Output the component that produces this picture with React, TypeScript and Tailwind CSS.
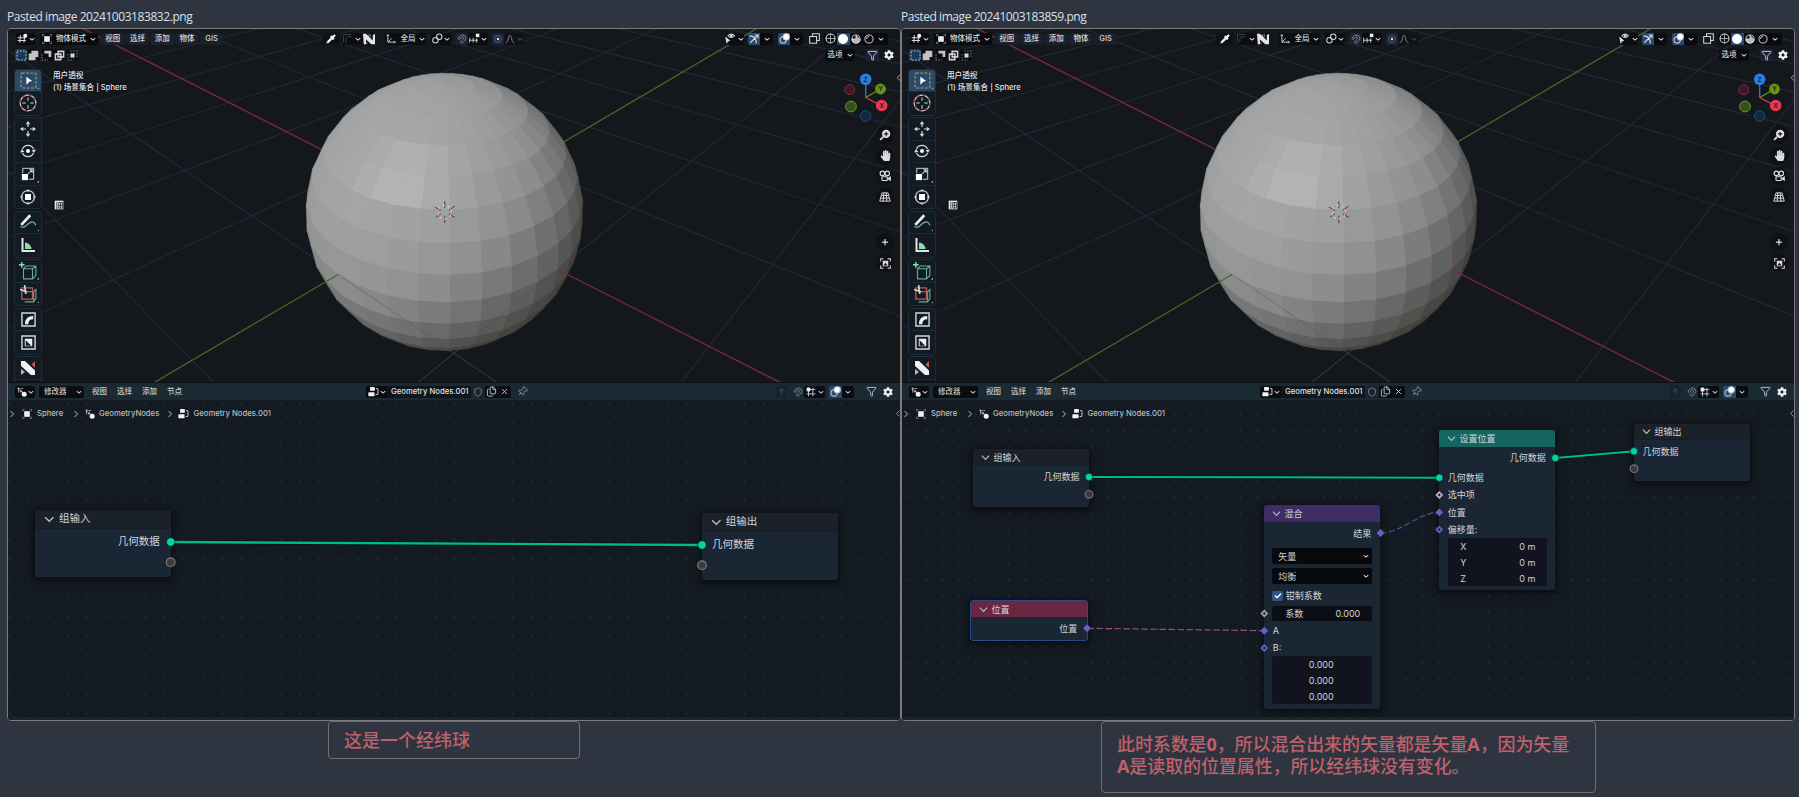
import React from "react";
import { Pipette, Filter, Shield, Files, Pin, X, ArrowUp, Check } from "lucide-react";
import { FaCog, FaHandPaper } from "react-icons/fa";

/* ---------- 3D scene ---------- */

const CX = 436.5;
const CY = 183;
const R = 138.5;
const DIST = 4.52;
const FOCAL = R * Math.sqrt(DIST * DIST - 1);
const ELEV = (33.1 * Math.PI) / 180;
const TURN = (47.1 * Math.PI) / 180;
const SE = Math.sin(ELEV);
const CE = Math.cos(ELEV);

type V3 = [number, number, number];

function toView(right: number, toward: number, up: number): V3 {
  return [right, up * CE - toward * SE, up * SE + toward * CE];
}

function project(v: V3): [number, number] {
  const s = FOCAL / (DIST - v[2]);
  return [CX + v[0] * s, CY - v[1] * s];
}

function floorPoint(x: number, y: number): V3 {
  const right = x * Math.sin(TURN) + y * Math.cos(TURN);
  const toward = x * Math.cos(TURN) - y * Math.sin(TURN);
  return toView(right, toward, 0);
}

function floorLine(x1: number, y1: number, x2: number, y2: number): string {
  let a = floorPoint(x1, y1);
  let b = floorPoint(x2, y2);
  const limit = DIST - 0.4;
  if (a[2] > limit && b[2] > limit) return "";
  const cut = (p: V3, q: V3): V3 => {
    const t = (limit - p[2]) / (q[2] - p[2]);
    return [p[0] + (q[0] - p[0]) * t, p[1] + (q[1] - p[1]) * t, limit];
  };
  if (a[2] > limit) a = cut(a, b);
  else if (b[2] > limit) b = cut(b, a);
  const [ax, ay] = project(a);
  const [bx, by] = project(b);
  return `M${ax.toFixed(1)} ${ay.toFixed(1)}L${bx.toFixed(1)} ${by.toFixed(1)}`;
}

const RAMP: [number, number][] = [
  [-1, 0.18],
  [-0.25, 0.25],
  [0, 0.33],
  [0.213, 0.41],
  [0.42, 0.495],
  [0.57, 0.56],
  [0.8, 0.62],
  [1, 0.65],
];

function shade(n: V3): string {
  const d = -0.42 * n[0] + 0.42 * n[1] + 0.8 * n[2];
  let l = 0.64;
  for (let i = 1; i < RAMP.length; i++) {
    if (d <= RAMP[i][0]) {
      const [x0, y0] = RAMP[i - 1];
      const [x1, y1] = RAMP[i];
      l = y0 + ((y1 - y0) * (d - x0)) / (x1 - x0);
      break;
    }
  }
  l += 0.075 * Math.exp(-(((n[0] + 0.23) / 0.22) ** 2) / 1.4 - (((n[1] - 0.2) / 0.12) ** 2) / 2);
  const warm = Math.max(0, Math.min(1, (0.12 - d) * 2.4));
  const v = l * 255;
  return `rgb(${Math.round(v + warm * 5)},${Math.round(v + 1)},${Math.round(v + 1 - warm * 5)})`;
}

function sphereFaces() {
  const faces: { pts: string; fill: string }[] = [];
  const step = Math.PI / 16;
  const at = (t: number, a: number) =>
    toView(Math.sin(t) * Math.sin(a), Math.sin(t) * Math.cos(a), Math.cos(t));
  for (let k = 0; k < 16; k++) {
    for (let s = 0; s < 32; s++) {
      const a0 = TURN + s * step;
      const n = at((k + 0.5) * step, a0 + step / 2);
      if (n[2] * DIST < 0.975) continue;
      const quad = [at(k * step, a0), at(k * step, a0 + step), at((k + 1) * step, a0 + step), at((k + 1) * step, a0)];
      faces.push({
        pts: quad.map((p) => project(p).map((c) => c.toFixed(1)).join(",")).join(" "),
        fill: shade(n),
      });
    }
  }
  return faces;
}

const FACES = sphereFaces();
const EXT = 12;
const OFFSETS = Array.from({ length: EXT * 2 + 1 }, (_, i) => i - EXT).filter((i) => i !== 0);
const GRID = OFFSETS.map((i) => floorLine(i, -EXT, i, EXT) + floorLine(-EXT, i, EXT, i)).join("");
const NEAR_GRID = floorLine(1, -EXT, 1, 0) + floorLine(0, -1, EXT, -1);

function Scene() {
  const [ox, oy] = [436.8, 183.2];
  return (
    <svg className="absolute inset-0" width="892" height="353" viewBox="0 0 892 353">
      <rect width="892" height="353" fill="#14171c" />
      <path d={GRID} stroke="#222838" strokeWidth="1.1" fill="none" />
      <path d={floorLine(-EXT, 0, 0, 0)} stroke="#7a2b45" strokeWidth="1.3" />
      <path d={floorLine(0, 0, 0, EXT)} stroke="#45682a" strokeWidth="1.3" />
      <g strokeWidth="1.6" strokeLinejoin="round">
        {FACES.map((f, i) => (
          <polygon key={i} points={f.pts} fill={f.fill} stroke={f.fill} strokeOpacity="0.5" />
        ))}
      </g>
      <g strokeWidth="0.5" strokeLinejoin="round">
        {FACES.map((f, i) => (
          <polygon key={i} points={f.pts} fill={f.fill} stroke={f.fill} strokeOpacity="0.5" />
        ))}
      </g>
      <path d={NEAR_GRID} stroke="#4a4f66" strokeOpacity="0.3" strokeWidth="1.1" fill="none" />
      <path d={floorLine(1, 0, EXT, 0)} stroke="#7a2b45" strokeWidth="1.3" />
      <path d={floorLine(0, -1, 0, -EXT)} stroke="#45682a" strokeWidth="1.3" />
      <g fill="none">
        <path
          d={`M${ox} ${oy - 11}v7M${ox} ${oy + 4}v7M${ox - 10} ${oy - 5}l6 3M${ox + 4} ${oy + 2}l6 3M${ox - 9} ${oy + 5}l5-3M${ox + 4} ${oy - 2}l6-4`}
          stroke="#33373b"
          strokeWidth="0.9"
        />
        <circle cx={ox} cy={oy} r="6.8" stroke="#e2e2e2" strokeWidth="0.9" />
        <circle cx={ox} cy={oy} r="6.8" stroke="#d95050" strokeWidth="1" strokeDasharray="2.67 2.67" />
        <circle cx={ox} cy={oy} r="1.1" fill="#4cc3ea" />
      </g>
    </svg>
  );
}

/* ---------- small icons ---------- */

type SvgProps = { children: React.ReactNode; size?: number; className?: string };

function Ico({ children, size = 10, className = "" }: SvgProps) {
  return (
    <svg
      width={size}
      height={size}
      viewBox="0 0 16 16"
      fill="none"
      stroke="currentColor"
      strokeWidth="1.5"
      className={"shrink-0 " + className}
    >
      {children}
    </svg>
  );
}

function Chev({ className = "" }: { className?: string }) {
  return (
    <Ico size={6} className={className}>
      <path d="M2 5.500 8 11l6-5.500" strokeWidth="2.800" />
    </Ico>
  );
}

function ObjectIcon({ size = 10 }: { size?: number }) {
  return (
    <Ico size={size}>
      <rect x="3.500" y="3.500" width="9" height="9" fill="#ededed" stroke="none" />
      <path d="M1 4V1h3M12 1h3v3M15 12v3h-3M4 15H1v-3" strokeOpacity="0.6" />
    </Ico>
  );
}

function NodesIcon() {
  return (
    <Ico size={10}>
      <path d="M2.500 3.500l3 3M5 2.500h5M8 7l2 3M2.500 4v5" strokeWidth="1.200" />
      <circle cx="2.500" cy="2.500" r="1.700" fill="currentColor" stroke="none" />
      <circle cx="6.500" cy="7" r="1.700" fill="currentColor" stroke="none" />
      <circle cx="11.500" cy="11.500" r="4" fill="#f2f2f2" stroke="none" />
    </Ico>
  );
}

function TreeIcon() {
  return (
    <Ico size={11}>
      <rect x="3" y="1.500" width="7" height="5.500" rx="1" fill="#f2f2f2" stroke="none" />
      <rect x="0.500" y="9" width="9" height="6" rx="1" fill="#f2f2f2" stroke="none" />
      <path d="M11.500 3.500h1.500q1.500 0 1.500 1.500v6q0 1.500-1.500 1.500h-2" />
    </Ico>
  );
}

function MagnetIcon({ size = 10 }: { size?: number }) {
  return (
    <Ico size={size}>
      <path d="M1.500 6.500 6 2.500Q10 0 13 3.500t-.5 7L8 15 5.500 12.500l4-4q1.500-1.800.5-3t-3 0L3.500 9z" strokeWidth="1.600" />
    </Ico>
  );
}

function OverlayIcon() {
  return (
    <Ico size={11}>
      <circle cx="6" cy="10" r="4.500" />
      <circle cx="10.500" cy="5.500" r="4.500" fill="#fff" />
    </Ico>
  );
}

/* ---------- header parts ---------- */

function Chip({ className, children }: { className: string; children?: React.ReactNode }) {
  return (
    <div className={"flex h-[12px] shrink-0 items-center justify-center rounded-[2px] " + className}>{children}</div>
  );
}

function ViewportHeader() {
  return (
    <div className="relative flex h-[19px] items-center pl-[8px] text-[7.5px] font-medium leading-none text-[#d6d8db]">
      <Chip className="w-[19px] gap-[1px] bg-[#090b0f]">
        <Ico size={11}>
          <path d="M5 3 4 14M11 6l-1 8M1 7h12M1 11h12" />
          <circle cx="12" cy="4" r="3" fill="#f2f2f2" stroke="none" />
        </Ico>
        <Chev />
      </Chip>
      <Chip className="ml-[5px] w-[58px] gap-[4px] bg-[#090b0f]">
        <ObjectIcon />
        <span>物体模式</span>
        <Chev />
      </Chip>
      <div className="ml-[3px] flex">
        {["视图", "选择", "添加", "物体", "GIS"].map((m) => (
          <Chip key={m} className="mr-[1px] w-[23.7px] bg-[#1a212b]">
            {m}
          </Chip>
        ))}
      </div>
      <Chip className="ml-[98px] w-[18px] bg-[#0e1116] text-white">
        <Pipette size={10} fill="currentColor" strokeWidth={2} />
      </Chip>
      <Chip className="ml-[2px] w-[20px] gap-[3px] bg-[#0b0d11]">
        <Ico size={9} className="text-[#474b50]">
          <path d="M1 15V1h14M5 15V9q0-4 4-4h6" />
        </Ico>
        <Chev />
      </Chip>
      <Chip className="w-[13px] bg-[#0b0d11] text-white">
        <Ico size={12}>
          <path d="M0 1h4l9 9V3l3-2v14h-5L4 8.500V15H1z" fill="#e4e4e4" stroke="none" />
          <path d="M7 2v3M9.500 1v5M5 12v3" strokeWidth="1" strokeOpacity="0.7" />
        </Ico>
      </Chip>
      <Chip className="ml-[10px] w-[41px] gap-[4px] bg-[#0b0d11]">
        <Ico size={10}>
          <path d="M3 1v12h12M3 13 9 7M1 3l2-2 2 2M13 11l2 2-2 2" strokeWidth="1.500" />
        </Ico>
        <span>全局</span>
        <Chev />
      </Chip>
      <Chip className="ml-[5px] w-[20px] gap-[1px] bg-[#0b0d11]">
        <Ico size={11}>
          <circle cx="5" cy="10.500" r="4" />
          <circle cx="10.500" cy="5.500" r="4" />
        </Ico>
        <Chev />
      </Chip>
      <Chip className="ml-[4px] w-[13px] bg-[#1a2233] text-[#858c99]">
        <MagnetIcon />
      </Chip>
      <Chip className="w-[20px] gap-[1px] bg-[#0b0d11]">
        <Ico size={11}>
          <path d="M1 7v7M6 7v7M11 8v6M1 10.500h12" strokeWidth="1.300" />
          <rect x="10" y="1" width="5" height="5" fill="#f2f2f2" stroke="none" />
        </Ico>
        <Chev />
      </Chip>
      <Chip className="ml-[4px] w-[12px] bg-[#1a2440]">
        <Ico size={10}>
          <circle cx="8" cy="8" r="5.500" strokeOpacity="0.35" />
          <circle cx="8" cy="8" r="2" fill="currentColor" stroke="none" />
        </Ico>
      </Chip>
      <Chip className="w-[20px] gap-[2px] bg-[#0f1217] text-[#85898e]">
        <Ico size={10}>
          <path d="M1 14c5 0 4-12 7-12s2 12 7 12" />
        </Ico>
        <Chev className="text-[#44484d]" />
      </Chip>

      <Chip className="ml-auto w-[19px] gap-[2px] bg-[#0b0d11]">
        <Ico size={11}>
          <path d="M4 4q5-5 10 0-5 5-10 0z" />
          <circle cx="9" cy="4" r="1.500" fill="currentColor" />
          <path d="m1 6 6 5-3 1-1.500 3z" fill="#eee" strokeWidth="1" />
        </Ico>
        <Chev />
      </Chip>
      <Chip className="ml-[4px] w-[12px] rounded-r-none bg-[#264a70]">
        <Ico size={10}>
          <path d="M1 3q10 0 11 12M2 14 14 2M9 1.500h5.500V7" strokeWidth="1.700" />
        </Ico>
      </Chip>
      <Chip className="w-[13px] rounded-l-none bg-[#090b0f]">
        <Chev />
      </Chip>
      <Chip className="ml-[5px] w-[12px] rounded-r-none bg-[#264a70]">
        <OverlayIcon />
      </Chip>
      <Chip className="w-[13px] rounded-l-none bg-[#090b0f]">
        <Chev />
      </Chip>
      <Chip className="ml-[5px] w-[12px] bg-[#13161b]">
        <Ico size={11}>
          <path d="M1 5h10v10H1zM5 5V1h10v10h-4" />
        </Ico>
      </Chip>
      <Chip className="ml-[4px] mr-[12px] w-[64px] bg-[#090b0f]">
        <div className="flex w-[12.5px] justify-center">
          <Ico size={11}>
            <circle cx="8" cy="8" r="6.500" />
            <path d="M8 1v14M1 8h14" strokeWidth="1" />
          </Ico>
        </div>
        <div className="flex h-[12px] w-[13px] items-center justify-center bg-[#264a70]">
          <div className="size-[10px] rounded-full bg-white" />
        </div>
        <div className="flex w-[12.5px] justify-center">
          <Ico size={10}>
            <circle cx="8" cy="8" r="6.500" />
            <path d="M8 1.500V8H1.500a6.500 6.500 0 0 0 13 0" fill="#b5b8bc" />
          </Ico>
        </div>
        <div className="flex w-[12.5px] justify-center">
          <Ico size={10}>
            <circle cx="8" cy="8" r="6.500" />
            <path d="M4 8a4 4 0 0 1 4-4" />
          </Ico>
        </div>
        <div className="flex w-[13px] justify-center">
          <Chev />
        </div>
      </Chip>
    </div>
  );
}

function SelectModes() {
  return (
    <div className="relative flex h-[14px] items-center pl-[7px] pr-[5px] text-[7.5px] font-medium leading-none text-[#d0d3d6]">
      <div className="flex gap-[0.8px]">
        <Chip className="w-[12px] bg-[#1a3a58]">
          <Ico size={11}>
            <path d="M1.500 1.500h13v13h-13z" strokeDasharray="2.200 2.200" stroke="#b9cede" />
          </Ico>
        </Chip>
        <Chip className="w-[12px] bg-[#0b0d11]">
          <Ico size={11}>
            <path d="M5 1h10v9h-4v5H1V5h4z" fill="#c4c4c4" stroke="none" />
          </Ico>
        </Chip>
        <Chip className="w-[12px] bg-[#0b0d11]">
          <Ico size={11}>
            <path d="M5 1h10v9h-4V5H5z" fill="#c4c4c4" stroke="none" />
            <path d="M1.500 6v8.500H10" strokeDasharray="2 2" strokeOpacity="0.7" />
          </Ico>
        </Chip>
        <Chip className="w-[12px] bg-[#0b0d11]">
          <Ico size={11}>
            <path d="M6 2h8v8H6zM2 6h8v8H2z" strokeWidth="2.200" stroke="#cfcfcf" />
          </Ico>
        </Chip>
        <Chip className="w-[12px] bg-[#0b0d11]">
          <Ico size={11}>
            <rect x="5" y="5" width="6" height="6" fill="#d4d4d4" stroke="none" />
            <path d="M5 1.500h9.500V10M1.500 6v8.500H10" strokeDasharray="2 2" strokeOpacity="0.6" />
          </Ico>
        </Chip>
      </div>
      <Chip className="ml-auto w-[30px] gap-[4px] bg-[#090b0f]">
        <span>选项</span>
        <Chev />
      </Chip>
      <Chip className="ml-[11px] w-[13px] bg-[#1a2233]">
        <Filter size={11} />
      </Chip>
      <Chip className="ml-[4px] w-[12px] text-[#f2f2f2]">
        <FaCog size={10} />
      </Chip>
    </div>
  );
}

/* ---------- tool shelf ---------- */

function Tool({ children, active, sub }: { children: React.ReactNode; active?: boolean; sub?: boolean }) {
  return (
    <div
      className={
        "relative flex h-[22.5px] shrink-0 items-center justify-center border-b border-[#1a2a38] text-[#d4d7da] last:border-b-0 " +
        (active ? "bg-[#294b69]" : "bg-[#121b23]")
      }
    >
      {children}
      {sub && (
        <svg className="absolute bottom-[2px] right-[2px]" width="2.500" height="2.500" viewBox="0 0 2 2">
          <path d="M2 0v2H0z" fill="#c8c8c8" />
        </svg>
      )}
    </div>
  );
}

function ToolGroup({ children }: { children: React.ReactNode }) {
  return <div className="w-[26px] shrink-0 overflow-hidden rounded-[3px] ring-1 ring-[#1b2c3b]">{children}</div>;
}

function Toolbar() {
  return (
    <div className="flex h-[313px] flex-col gap-[3.500px] overflow-hidden pl-[7px] pr-[1px] pt-[0.500px]">
      <ToolGroup>
        <Tool active sub>
          <Ico size={17}>
            <rect x="1" y="1" width="14" height="14" rx="1" stroke="#c79c45" strokeDasharray="2.500 1.500" strokeWidth="1" />
            <path d="m6 4.500 5.500 4-2.500.4L6 12z" fill="#fff" stroke="none" />
          </Ico>
        </Tool>
        <Tool>
          <Ico size={18}>
            <circle cx="8" cy="8" r="7" strokeWidth="1.100" />
            <circle cx="8" cy="8" r="7" stroke="#a33c46" strokeWidth="1.100" strokeDasharray="3 2.500" />
            <path d="M8 3v3M8 10v3M3 8h3M10 8h3" strokeWidth="0.900" />
          </Ico>
        </Tool>
      </ToolGroup>
      <ToolGroup>
        <Tool>
          <Ico size={16}>
            <path d="M8 2v4M8 10v4M2 8h4M10 8h4" strokeWidth="1.200" />
            <path d="m8 0 2.300 3.200H5.700zM8 16l2.300-3.200H5.700zM0 8l3.200-2.300v4.600zM16 8l-3.200-2.300v4.600z" fill="currentColor" stroke="none" />
          </Ico>
        </Tool>
        <Tool>
          <Ico size={16}>
            <path d="M2.500 6a6 6 0 0 1 11 0M13.500 10a6 6 0 0 1-11 0" strokeWidth="1.300" />
            <circle cx="8" cy="8" r="2" fill="#fff" stroke="none" />
            <path d="m16 6.500-2 3.500-2.500-3zM0 9.500l2-3.500L4.500 9z" fill="currentColor" stroke="none" />
          </Ico>
        </Tool>
        <Tool sub>
          <Ico size={14}>
            <path d="M2 7V1.500h12.500V14H9" strokeWidth="1.100" />
            <rect x="1" y="8" width="7" height="7" fill="#fff" stroke="none" />
            <path d="m8 8 4.500-4.500M9.500 3.200h3.300v3.300" strokeWidth="1.200" />
          </Ico>
        </Tool>
        <Tool>
          <Ico size={16}>
            <circle cx="8" cy="8" r="6.500" strokeWidth="1.100" />
            <rect x="5" y="5" width="6" height="6" fill="#fff" stroke="none" />
            <path d="m8 0 2 2.500H6zM8 16l2-2.500H6zM0 8l2.500-2v4zM16 8l-2.500-2v4z" fill="currentColor" stroke="none" />
          </Ico>
        </Tool>
      </ToolGroup>
      <ToolGroup>
        <Tool sub>
          <Ico size={18}>
            <path d="M1 12c4 2 5-1 8-3s5-1 6 2" stroke="#67a88b" strokeWidth="1.200" />
            <path d="M2 10.500 10 2" stroke="#eee" strokeWidth="2.400" />
          </Ico>
        </Tool>
        <Tool>
          <Ico size={16}>
            <path d="M2.500 1v13H15" strokeWidth="2" stroke="#e4e4e4" />
            <path d="M5 12V5.500A7 7 0 0 1 11.500 12z" fill="#8fdcb4" stroke="none" />
          </Ico>
        </Tool>
      </ToolGroup>
      <ToolGroup>
        <Tool sub>
          <Ico size={18} className="text-[#69a98c]">
            <path d="M4 6h8v9H4zM4 6l2.500-2.500H15V12l-3 3M12 6l3-2.500" strokeWidth="1" />
            <path d="M2.500 0v5M0 2.500h5" strokeWidth="1.300" stroke="#7fe0b0" />
          </Ico>
        </Tool>
        <Tool sub>
          <Ico size={18}>
            <path d="M5 6h8v9H5M13 6l2-2v8l-2 3" strokeWidth="1" stroke="#69a98c" />
            <path d="M2.500 2.500h9.500v10H2.500z" stroke="#bf5a55" strokeWidth="1.200" />
            <path d="M1 4l6 2M5 0l1 8" strokeWidth="1.500" />
          </Ico>
        </Tool>
      </ToolGroup>
      <ToolGroup>
        <Tool>
          <Ico size={15}>
            <path d="M1 1h14v14H1z" />
            <path d="M6 13q0-7 7-7" strokeWidth="3.500" stroke="#eee" />
          </Ico>
        </Tool>
        <Tool>
          <Ico size={15}>
            <path d="M1 1h14v14H1z" />
            <rect x="4" y="4" width="8" height="8" fill="#eee" stroke="none" />
            <path d="m5 5.500 6 6H5z" fill="#15202a" stroke="none" />
          </Ico>
        </Tool>
      </ToolGroup>
      <ToolGroup>
        <Tool>
          <Ico size={16}>
            <path d="M1 1h4l10 9.500V15h-4L1 6z" fill="#f0f0f0" stroke="none" />
            <path d="M1 9v6l4-3z" fill="#b5b8ba" stroke="none" />
            <path d="m15 1-3.500 3.500L15 8z" fill="#c05a50" stroke="none" />
          </Ico>
        </Tool>
        <Tool>{null}</Tool>
      </ToolGroup>
    </div>
  );
}

function NavGizmo() {
  return (
    <svg className="absolute left-[834px] top-[42px]" width="58" height="56" viewBox="834 42 58 56">
      <path d="M857.700 68.500V50" stroke="#2a7de1" strokeWidth="1.300" />
      <path d="m857.700 68.500 14-8" stroke="#6b9a12" strokeWidth="1.300" />
      <path d="m857.700 68.500 15 8" stroke="#ec3750" strokeWidth="1.300" />
      <circle cx="841.800" cy="60.700" r="5" fill="#3a1b26" stroke="#7d2a3c" />
      <circle cx="843" cy="77.500" r="5.400" fill="#34501c" stroke="#6b9a12" />
      <circle cx="857.700" cy="87" r="5.200" fill="#15283e" stroke="#1f4c7c" />
      <circle cx="857.700" cy="50.300" r="5.800" fill="#2a7de1" />
      <circle cx="872.500" cy="60" r="5.400" fill="#679315" />
      <circle cx="873.700" cy="76.500" r="5.800" fill="#ec3750" />
      <g className="font-['Inter',sans-serif] text-[6.500px] font-semibold" textAnchor="middle" fill="#10202a">
        <text x="857.700" y="52.700">Z</text>
        <text x="872.500" y="62.400">Y</text>
        <text x="873.700" y="78.900">X</text>
      </g>
      <path d="m892 46-3 2.700 3 2.700" fill="none" stroke="#9a9da1" strokeWidth="1" />
    </svg>
  );
}

function NavButton({ children }: { children: React.ReactNode }) {
  return (
    <div className="flex size-[18px] shrink-0 items-center justify-center rounded-full bg-[#0f1115] text-[#dcdcdc]">
      {children}
    </div>
  );
}

function NavColumn() {
  return (
    <div className="ml-auto mr-[6px] flex flex-col items-center gap-[2.700px] pt-[57px]">
      <NavButton>
        <Ico size={12}>
          <circle cx="9.500" cy="6.500" r="5.500" fill="#e4e4e4" stroke="none" />
          <path d="m5.500 10.500-4 4" strokeWidth="2.500" />
          <path d="M9.500 3.500v6M6.500 6.500h6" stroke="#15171a" />
        </Ico>
      </NavButton>
      <NavButton>
        <FaHandPaper size={11} />
      </NavButton>
      <NavButton>
        <Ico size={12}>
          <circle cx="4.500" cy="4.500" r="3" />
          <circle cx="11" cy="4.500" r="3" />
          <rect x="4" y="9" width="7" height="5" rx="1" />
          <path d="m12 11.500 3-2v4z" fill="currentColor" />
        </Ico>
      </NavButton>
      <NavButton>
        <Ico size={12}>
          <path d="M4 2.500h8l3 11H1zM6.500 2.500 5.500 13.500M9.500 2.500l1 11M3.500 6h9M2.500 9.500h11" strokeWidth="1.300" />
        </Ico>
      </NavButton>
      <div className="h-[22px]" />
      <NavButton>
        <Ico size={10}>
          <path d="M8 3v10M3 8h10" strokeWidth="2" />
        </Ico>
      </NavButton>
      <NavButton>
        <Ico size={11}>
          <path d="M1 5V1h4M11 1h4v4M15 11v4h-4M5 15H1v-4" />
          <path d="M4 4h8v8H4z" fill="#dcdcdc" stroke="none" />
          <path d="m5 11 3-4 3 4z" fill="#15171a" stroke="none" />
        </Ico>
      </NavButton>
    </div>
  );
}

function Viewport() {
  return (
    <div className="relative flex h-[353px] flex-col overflow-hidden">
      <Scene />
      <ViewportHeader />
      <SelectModes />
      <NavGizmo />
      <div className="relative flex pt-[7px]">
        <Toolbar />
        <div className="flex flex-col pl-[11px] pt-[0.500px] text-[7.600px] font-medium leading-[12.300px] text-[#e8e8e8] [text-shadow:0_0_2px_#000]">
          <span>用户透视</span>
          <span>(1) 场景集合 | Sphere</span>
          <div className="mt-[106px] flex h-[10px] w-[11px] items-center justify-center bg-[#0b0c0f]">
            <Ico size={10}>
              <rect x="1" y="1" width="14" height="14" fill="#e6e6e6" stroke="none" />
              <path d="M4.500 3v12M7.500 4h6v9h-6zM7.500 8.500h6M10.500 4v9" stroke="#222" strokeWidth="1.200" />
            </Ico>
          </div>
        </div>
        <NavColumn />
      </div>
    </div>
  );
}

/* ---------- node editor ---------- */

function NodeHeader() {
  return (
    <div className="flex h-[17px] items-center bg-[#1b2933] pl-[7px] text-[7.500px] font-medium leading-none text-[#c3c8cd]">
      <Chip className="w-[20px] gap-[1px] bg-[#090c10]">
        <NodesIcon />
        <Chev />
      </Chip>
      <Chip className="ml-[4px] w-[45px] bg-[#090c10] pl-[5px] pr-[2px]">
        <span className="flex-1">修改器</span>
        <Chev />
      </Chip>
      <div className="ml-[3px] flex">
        {["视图", "选择", "添加", "节点"].map((m) => (
          <div key={m} className="w-[25px] text-center">
            {m}
          </div>
        ))}
      </div>
      <Chip className="ml-[179px] w-[21px] gap-[1px] rounded-r-none bg-[#090c10]">
        <TreeIcon />
        <Chev />
      </Chip>
      <div className="flex h-[12px] w-[84px] items-center whitespace-nowrap bg-[#0e151c] pl-[4px] font-['Inter',sans-serif] text-[7.700px] font-medium text-[#dfe1e4]">
        Geometry Nodes.001
      </div>
      <Chip className="w-[14px] rounded-none bg-[#1b2530] text-[#858b93]">
        <Shield size={10} />
      </Chip>
      <Chip className="w-[13px] rounded-none bg-[#0a0e13]">
        <Files size={11} />
      </Chip>
      <Chip className="w-[13px] bg-[#0a0e13]">
        <X size={9} strokeWidth={2.500} />
      </Chip>
      <Chip className="ml-[4px] w-[14px] text-[#8b939b]">
        <Pin size={11} className="rotate-45" />
      </Chip>
      <Chip className="ml-auto w-[12px] bg-[#17222c] text-[#4b565f]">
        <ArrowUp size={9} />
      </Chip>
      <Chip className="ml-[4px] w-[13px] text-[#7c858e]">
        <MagnetIcon />
      </Chip>
      <Chip className="w-[21px] gap-[2px] bg-[#090c10]">
        <Ico size={10}>
          <path d="M4 1v14M11 1v14M1 4h14M1 11h14" />
          <rect x="1" y="1" width="6" height="6" fill="#eee" stroke="none" />
        </Ico>
        <Chev />
      </Chip>
      <Chip className="ml-[4px] w-[13px] rounded-r-none bg-[#264a70]">
        <OverlayIcon />
      </Chip>
      <Chip className="w-[12px] rounded-l-none bg-[#090c10]">
        <Chev />
      </Chip>
      <Chip className="ml-[11px] w-[13px]">
        <Filter size={11} />
      </Chip>
      <Chip className="ml-[4px] mr-[6px] w-[12px] text-[#f2f2f2]">
        <FaCog size={10} />
      </Chip>
    </div>
  );
}

function Breadcrumb() {
  const sep = (
    <Ico size={8}>
      <path d="m5 2 6 6-6 6" strokeWidth="2" />
    </Ico>
  );
  return (
    <div className="relative flex h-[27px] items-center font-medium text-[#b9bec3]">
      <div className="flex w-[14px] shrink-0 pl-0">{sep}</div>
      <ObjectIcon />
      <span className="ml-[5px] w-[35px] shrink-0">Sphere</span>
      {sep}
      <div className="ml-[5px] flex w-[14px] shrink-0">
        <NodesIcon />
      </div>
      <span className="w-[66.500px] shrink-0">GeometryNodes</span>
      {sep}
      <div className="ml-[4px] flex w-[16px] shrink-0">
        <TreeIcon />
      </div>
      <span>Geometry Nodes.001</span>
    </div>
  );
}

type NodeProps = { box: string; head: string; title: string; children?: React.ReactNode };

function Node({ box, head, title, children }: NodeProps) {
  return (
    <div className={"absolute flex flex-col rounded-[3px] bg-[#1b2635] text-[#d2d5d9] shadow-[0_2px_6px_2px_rgba(0,0,0,0.45)] " + box}>
      <div className={"flex shrink-0 items-center rounded-t-[3px] " + head}>
        <svg className="mr-[0.400em] shrink-0" width="1em" height="1em" viewBox="0 0 10 10">
          <path d="m1 3 4 4 4-4" fill="none" stroke="#b8bcc1" strokeWidth="1.300" />
        </svg>
        {title}
      </div>
      {children}
    </div>
  );
}

const GEO = "#00d6a3";
const VEC = "#6363c7";

function Diamond({ x, y, color = VEC, hollow }: { x: number; y: number; color?: string; hollow?: boolean }) {
  return (
    <g transform={`translate(${x} ${y})`}>
      <path d="M0-4.200 4.200 0 0 4.200-4.200 0z" fill={color} stroke="#10151c" strokeWidth="0.400" />
      {hollow && <path d="M0-1.500 1.500 0 0 1.500-1.500 0z" fill="#16191f" />}
    </g>
  );
}

function Dots({ id, step, x, y }: { id: string; step: number; x: number; y: number }) {
  return (
    <svg className="absolute inset-0" width="892" height="320">
      <defs>
        <pattern id={id} width={step} height={step} x={x} y={y} patternUnits="userSpaceOnUse">
          <rect width="1.400" height="1.400" fill="#2a353e" />
        </pattern>
      </defs>
      <rect width="892" height="320" fill={`url(#${id})`} />
    </svg>
  );
}

function LeftGraph() {
  const box = "w-[135.500px] h-[66.500px] text-[10.500px] leading-none";
  const head = "h-[19px] bg-[#1b2129] pl-[9px] border-b border-[#161c24]";
  return (
    <>
      <Node box={"left-[27.300px] top-[110px] " + box} head={head} title="组输入">
        <div className="mt-[7.500px] pr-[11px] text-right">几何数据</div>
      </Node>
      <Node box={"left-[694px] top-[113px] " + box} head={head} title="组输出">
        <div className="mt-[7.500px] pl-[10px]">几何数据</div>
      </Node>
      <svg className="absolute inset-0" width="892" height="320">
        <path d="M163 142 694 145" stroke="#07130f" strokeWidth="4" />
        <path d="M163 142 694 145" stroke="#00b98d" strokeWidth="2.400" />
        <g fill={GEO} stroke="#0d1a1a" strokeWidth="0.600">
          <circle cx="162.700" cy="142" r="4.200" />
          <circle cx="694" cy="145" r="4.200" />
        </g>
        <g fill="#3b3b3b" stroke="#737373" strokeWidth="1.300">
          <circle cx="162.700" cy="162.300" r="4.300" />
          <circle cx="694" cy="165.300" r="4.300" />
        </g>
      </svg>
    </>
  );
}

function RightGraph() {
  const io = "w-[116px] h-[57.300px]";
  const ioHead = "h-[16.700px] bg-[#1b2129] pl-[7.800px] border-b border-[#161c24]";
  const head = "h-[16.700px] pl-[7.500px]";
  return (
    <div className="text-[9px] leading-none">
      <Node box={"left-[71px] top-[49.300px] " + io} head={ioHead} title="组输入">
        <div className="mt-[6.500px] pr-[9.500px] text-right">几何数据</div>
      </Node>
      <Node box={"left-[732px] top-[23.700px] " + io} head={ioHead} title="组输出">
        <div className="mt-[6.500px] pl-[8.500px]">几何数据</div>
      </Node>
      <Node
        box="left-[68.300px] top-[200px] w-[117.400px] h-[41px] border border-[#2a4a85]"
        head="h-[16px] pl-[7.500px] bg-[#6a2840]"
        title="位置"
      >
        <div className="mt-[7px] pr-[9.500px] text-right">位置</div>
      </Node>
      <Node box="left-[537.300px] top-[30.300px] w-[116px] h-[159.300px]" head={head + " bg-[#14665e]"} title="设置位置">
        <div className="mt-[6.500px] pr-[9.500px] text-right">几何数据</div>
        <div className="mt-[10.500px] flex flex-col gap-[8.300px] pl-[8.500px]">
          <span>几何数据</span>
          <span>选中项</span>
          <span>位置</span>
          <span>偏移量:</span>
        </div>
        <div className="mx-[8.500px] mt-[4.500px] flex h-[47.700px] flex-col justify-around rounded-[2px] bg-[#11141e] pl-[12.500px] pr-[11.500px]">
          {["X", "Y", "Z"].map((a) => (
            <div key={a} className="flex justify-between">
              <span>{a}</span>
              <span>0 m</span>
            </div>
          ))}
        </div>
      </Node>
      <Node box="left-[362.300px] top-[105.300px] w-[116px] h-[203.700px]" head={head + " bg-[#3d2d64]"} title="混合">
        <div className="flex h-[26.500px] items-center justify-end pb-[3px] pr-[9px]">结果</div>
        {["矢量", "均衡"].map((t) => (
          <div key={t} className="mx-[8px] mb-[4.300px] flex h-[15.600px] shrink-0 items-center justify-between rounded-[2px] bg-[#07090d] pl-[6px] pr-[3px]">
            <span>{t}</span>
            <Chev />
          </div>
        ))}
        <div className="mx-[8px] mt-[2px] flex h-[11px] shrink-0 items-center gap-[3px]">
          <div className="flex size-[10.500px] items-center justify-center rounded-[2px] bg-[#2b5686] text-white">
            <Check size={8} strokeWidth={4} />
          </div>
          <span>钳制系数</span>
        </div>
        <div className="mx-[8px] mt-[4.500px] flex h-[15.600px] shrink-0 items-center justify-between rounded-[2px] bg-[#0b0e14] pl-[13px] pr-[12px]">
          <span>系数</span>
          <span>0.000</span>
        </div>
        <span className="mt-[4.700px] pl-[8.500px]">A</span>
        <span className="mt-[8.300px] pl-[8.500px]">B:</span>
        <div className="mx-[8px] mt-auto mb-[4.500px] flex h-[48.500px] flex-col items-center justify-around rounded-[2px] bg-[#11141e] pr-[2px]">
          <span>0.000</span>
          <span>0.000</span>
          <span>0.000</span>
        </div>
      </Node>
      <svg className="absolute inset-0" width="892" height="320" fill="none">
        <path d="M187 77 537.300 77.700M653.300 58 732 51.300" stroke="#07130f" strokeWidth="3.400" />
        <path d="M187 77 537.300 77.700M653.300 58 732 51.300" stroke="#00b98d" strokeWidth="2" />
        <path d="M478.500 133C500 133 516 112.400 537.300 112.400" stroke="#524da3" strokeWidth="1.200" strokeDasharray="6 2.500" />
        <path d="M185.500 228.300 362.300 230.700" stroke="#94507f" strokeWidth="1.200" strokeDasharray="6.500 2.500" />
        <g fill={GEO} stroke="#0d1a1a" strokeWidth="0.600">
          <circle cx="187" cy="77" r="3.700" />
          <circle cx="537.300" cy="77.700" r="3.700" />
          <circle cx="653.300" cy="58" r="3.700" />
          <circle cx="732" cy="51.300" r="3.700" />
        </g>
        <g fill="#3b3b3b" stroke="#737373" strokeWidth="1.200">
          <circle cx="187" cy="94.300" r="3.800" />
          <circle cx="732" cy="68.700" r="3.800" />
        </g>
        <Diamond x={537.3} y={95} color="#cca6d6" hollow />
        <Diamond x={537.3} y={112.4} />
        <Diamond x={537.3} y={129.6} hollow />
        <Diamond x={478.5} y={133} />
        <Diamond x={185} y={228.3} />
        <Diamond x={362.3} y={213.5} color="#a1a1a1" hollow />
        <Diamond x={362.3} y={230.7} />
        <Diamond x={362.3} y={248} hollow />
      </svg>
    </div>
  );
}

function NodeEditor({ right }: { right?: boolean }) {
  return (
    <div className="flex flex-1 flex-col border-t border-[#0c1015] bg-[#131a21]">
      <NodeHeader />
      <div className="relative flex-1 overflow-hidden border-b-[3px] border-[#1b2530]">
        {right ? <Dots id="dots-b" step={16.55} x={6.8} y={-3} /> : <Dots id="dots-a" step={19.35} x={20.2} y={3.3} />}
        <div className="font-['Inter','Noto_Sans_CJK_SC',sans-serif] text-[7.700px] leading-none">
          <Breadcrumb />
        </div>
        {right ? <RightGraph /> : <LeftGraph />}
        <svg className="absolute right-0 top-[9px]" width="5" height="9" viewBox="0 0 5 9">
          <path d="M4.500 1.500 1.500 4.500l3 3" fill="none" stroke="#8d9297" />
        </svg>
      </div>
    </div>
  );
}

/* ---------- canvas cards ---------- */

function Shot({ name, right }: { name: string; right?: boolean }) {
  return (
    <>
      <div className="h-[28px] whitespace-nowrap pt-[8px] font-['Open_Sans',sans-serif] text-[12px] leading-[18px] tracking-[-0.430px] text-[#dbe0ea]">
        {name}
      </div>
      <div className="flex h-[693px] flex-col overflow-hidden rounded-[4px] border border-[#7b7b7b] bg-[#14171c]">
        <Viewport />
        <NodeEditor right={right} />
      </div>
    </>
  );
}

export default function App() {
  return (
    <div className="flex h-[797px] w-[1799px] overflow-hidden bg-[#2e3440] pl-[7px] font-['Inter','Noto_Sans_CJK_SC',sans-serif]">
      <section className="w-[894px] shrink-0">
        <Shot name="Pasted image 20241003183832.png" />
        <div className="ml-[321px] flex h-[38px] w-[252px] items-center rounded-[4px] border border-[#6f7072] pl-[15px] font-['Open_Sans','Noto_Sans_CJK_SC',sans-serif] text-[18px] font-medium text-[#bf616a]">
          这是一个经纬球
        </div>
      </section>
      <section className="w-[894px] shrink-0">
        <Shot name="Pasted image 20241003183859.png" right />
        <div className="ml-[200px] h-[72px] w-[495px] whitespace-nowrap rounded-[4px] border border-[#6f7072] pl-[15px] pt-[11px] font-['Open_Sans','Noto_Sans_CJK_SC',sans-serif] text-[18px] font-medium leading-[22px] tracking-[-0.100px] text-[#bf616a]">
          此时系数是<b>0</b>，所以混合出来的矢量都是矢量<b>A</b>，因为矢量
          <br />
          <b>A</b>是读取的位置属性，所以经纬球没有变化。
        </div>
      </section>
    </div>
  );
}
